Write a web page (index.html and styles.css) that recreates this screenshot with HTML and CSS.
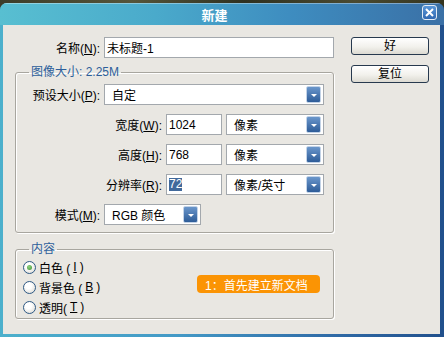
FILE: index.html
```html
<!DOCTYPE html>
<html lang="zh-CN">
<head>
  <meta charset="UTF-8">
  <meta name="viewport" content="width=device-width, initial-scale=1.0">
  <title>新建</title>
  <link rel="stylesheet" href="styles.css">
</head>
<body>
  <div class="window">
    <div class="titlebar">
      <h1>新建</h1>
      <button class="close-btn" aria-label="关闭">
        <svg width="9" height="9" viewBox="0 0 9 9"><path d="M1 1L8 8M8 1L1 8" stroke="#fff" stroke-width="2"/></svg>
      </button>
    </div>

    <div class="dialog">
      <div class="form">
        <!-- 名称 -->
        <div class="row">
          <label class="lbl">名称(<u>N</u>):</label>
          <div class="field name-field">未标题-1</div>
        </div>

        <!-- 图像大小 -->
        <fieldset class="group">
          <legend>图像大小: 2.25M</legend>
          <div class="rows">
            <div class="row">
              <label class="lbl in">预设大小(<u>P</u>):</label>
              <div class="select w-preset"><span>自定</span><i class="arrow"></i></div>
            </div>
            <div class="row">
              <label class="lbl wide">宽度(<u>W</u>):</label>
              <div class="field num">1024</div>
              <div class="select w-unit"><span>像素</span><i class="arrow"></i></div>
            </div>
            <div class="row">
              <label class="lbl wide">高度(<u>H</u>):</label>
              <div class="field num">768</div>
              <div class="select w-unit"><span>像素</span><i class="arrow"></i></div>
            </div>
            <div class="row">
              <label class="lbl wide">分辨率(<u>R</u>):</label>
              <div class="field num"><span class="sel">72</span></div>
              <div class="select w-unit"><span>像素/英寸</span><i class="arrow"></i></div>
            </div>
            <div class="row">
              <label class="lbl in">模式(<u>M</u>):</label>
              <div class="select w-mode"><span>RGB 颜色</span><i class="arrow"></i></div>
            </div>
          </div>
        </fieldset>

        <!-- 内容 -->
        <fieldset class="group content-group">
          <legend>内容</legend>
          <div class="content-row">
            <div class="radios">
              <div class="radio-item"><i class="radio on"></i>白色 (<u>I</u>)</div>
              <div class="radio-item"><i class="radio"></i>背景色 (<u>B</u>)</div>
              <div class="radio-item"><i class="radio"></i>透明(<u>T</u>)</div>
            </div>
            <div class="badge">1：首先建立新文档</div>
          </div>
        </fieldset>
      </div>

      <div class="side">
        <button class="btn">好</button>
        <button class="btn">复位</button>
      </div>
    </div>
  </div>
</body>
</html>
```

FILE: styles.css
```css
* {
  margin: 0;
  padding: 0;
  box-sizing: border-box;
}

body {
  width: 444px;
  height: 337px;
  overflow: hidden;
  padding-top: 3px;
  background: linear-gradient(90deg, #3c3d29 0%, #55553a 30%, #2f3121 55%, #4a4a31 80%, #34341f 100%);
  font-family: "Liberation Sans", "Noto Sans CJK SC", sans-serif;
  font-size: 12px;
  color: #000;
}

.window {
  height: 334px;
  display: flex;
  flex-direction: column;
  border-radius: 7px 7px 0 0;
  overflow: hidden;
  background: linear-gradient(90deg, #4cb0cc 0%, #4399c6 40%, #2f6aa6 75%, #21508c 100%);
}

.titlebar {
  height: 22px;
  display: flex;
  align-items: center;
  padding: 0 7px;
  background: linear-gradient(90deg, #58bfd1 0%, #4aaacb 35%, #3e8dc0 65%, #3a70a6 100%);
  box-shadow: inset 0 1px 0 rgba(255, 255, 255, 0.35);
}

.titlebar h1 {
  flex: 1;
  text-align: center;
  font-size: 13px;
  font-weight: bold;
  color: #fff;
  font-family: "Noto Sans CJK SC", sans-serif;
}

.close-btn {
  width: 15px;
  height: 15px;
  margin-top: -3px;
  border: 1px solid #e4ecf6;
  border-radius: 3px;
  background: linear-gradient(#5a97d8, #3069b2);
  display: flex;
  align-items: center;
  justify-content: center;
}

.dialog {
  flex: 1;
  margin: 0 4px 3px 3px;
  background: #e9e7e2;
  display: flex;
  padding-top: 12px;
}

.form {
  width: 331px;
  padding-left: 12px;
}

.side {
  margin-left: 17px;
  width: 78px;
  display: flex;
  flex-direction: column;
  gap: 10px;
}

.btn {
  height: 18px;
  border: 1px solid #27394e;
  border-radius: 3px;
  background: linear-gradient(#ffffff, #f2f1ec 55%, #dcdad2);
  font-family: "Liberation Sans", "Noto Sans CJK SC", sans-serif;
  font-size: 12px;
  color: #000;
  line-height: 14px;
}

.row {
  display: flex;
  align-items: center;
  height: 21px;
  gap: 4px;
}

.lbl {
  width: 85px;
  text-align: right;
  white-space: nowrap;
}

.lbl.in {
  width: 84px;
}

.lbl.wide {
  width: 146px;
}

.field {
  height: 21px;
  background: #fff;
  border: 1px solid #a3a8ad;
  padding-left: 2px;
  display: flex;
  align-items: center;
  white-space: nowrap;
}

.name-field {
  width: 230px;
}

.num {
  width: 56px;
}

.sel {
  background: #41699b;
  color: #fff;
  line-height: 13px;
}

.select {
  height: 21px;
  background: #fff;
  border: 1px solid #a3a8ad;
  display: flex;
  align-items: center;
  padding: 0 2px 0 7px;
  white-space: nowrap;
}

.select span {
  flex: 1;
}

.w-preset {
  width: 220px;
}

.w-unit {
  width: 98px;
}

.w-mode {
  width: 97px;
}

.arrow {
  width: 15px;
  height: 17px;
  border: 1px solid #c3d3e7;
  border-radius: 2px;
  background: linear-gradient(#6a96cb, #2d5c98);
  display: flex;
  align-items: center;
  justify-content: center;
}

.arrow::after {
  content: "";
  width: 0;
  height: 0;
  border-left: 3px solid transparent;
  border-right: 3px solid transparent;
  border-top: 3px solid #fff;
  margin-top: 1px;
}

.group {
  border: 1px solid #a8a69f;
  border-radius: 3px;
  box-shadow: 1px 1px 0 #fff, inset 1px 1px 0 #fff;
  margin-top: 7px;
  padding: 5px 0 7px;
}

.group legend {
  margin-left: 13px;
  padding: 0 2px;
  line-height: 14px;
  color: #2d5f9b;
}

.rows {
  display: flex;
  flex-direction: column;
  gap: 9px;
}

.content-group {
  margin-top: 9px;
  padding: 1px 0 1px;
}

.content-row {
  display: flex;
  align-items: center;
}

.radios {
  padding-left: 7px;
}

.radio-item {
  height: 20px;
  display: flex;
  align-items: center;
  gap: 3px;
  white-space: nowrap;
}

.radio {
  width: 13px;
  height: 13px;
  border-radius: 50%;
  border: 1px solid #2f5a85;
  background: radial-gradient(circle at 40% 35%, #ffffff 30%, #d6d4cc);
  display: flex;
  align-items: center;
  justify-content: center;
}

.radio.on::after {
  content: "";
  width: 5px;
  height: 5px;
  border-radius: 50%;
  background: radial-gradient(circle at 40% 35%, #8fd27f, #3e9234);
}

.badge {
  margin-left: auto;
  margin-right: 13px;
  margin-bottom: 6px;
  width: 123px;
  height: 18px;
  border-radius: 4px;
  background: #fb9404;
  color: #fff;
  padding-left: 8px;
  display: flex;
  align-items: center;
  white-space: nowrap;
}
```
